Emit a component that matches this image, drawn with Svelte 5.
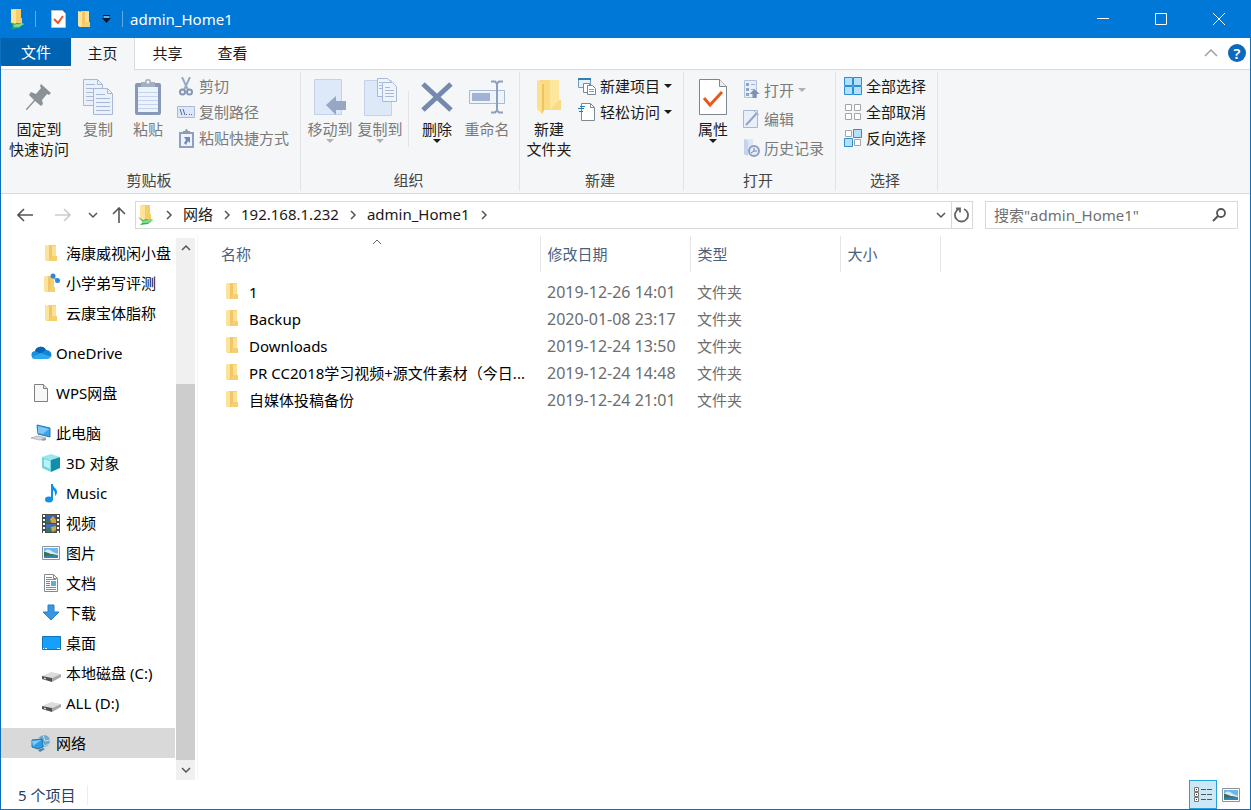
<script lang="ts">
  let activeTab = $state("主页");
  let selected = $state("网络");
  let view = $state("details");
  let query = $state("");

  const tabs = ["主页", "共享", "查看"];

  const tree = [
    [
      { name: "海康威视闲小盘", icon: "folder", child: true },
      { name: "小学弟写评测", icon: "folder-sync", child: true },
      { name: "云康宝体脂称", icon: "folder", child: true },
    ],
    [{ name: "OneDrive", icon: "cloud" }],
    [{ name: "WPS网盘", icon: "page" }],
    [
      { name: "此电脑", icon: "pc" },
      { name: "3D 对象", icon: "cube", child: true },
      { name: "Music", icon: "music", child: true },
      { name: "视频", icon: "video", child: true },
      { name: "图片", icon: "picture", child: true },
      { name: "文档", icon: "document", child: true },
      { name: "下载", icon: "download", child: true },
      { name: "桌面", icon: "desktop", child: true },
      { name: "本地磁盘 (C:)", icon: "disk", child: true },
      { name: "ALL (D:)", icon: "disk", child: true },
    ],
    [{ name: "网络", icon: "network" }],
  ];

  const path = ["网络", "192.168.1.232", "admin_Home1"];

  const files = [
    { name: "1", date: "2019-12-26 14:01" },
    { name: "Backup", date: "2020-01-08 23:17" },
    { name: "Downloads", date: "2019-12-24 13:50" },
    { name: "PR CC2018学习视频+源文件素材（今日...", date: "2019-12-24 14:48" },
    { name: "自媒体投稿备份", date: "2019-12-24 21:01" },
  ];
</script>

{#snippet icon(name: string)}
  {#if name === "folder"}
    <svg width="14" height="17" viewBox="0 0 14 17">
      <path d="M4 0h8v11h1v5H2z" fill="#f5cf70" />
      <path d="M1 0l4 1v15l-4-1z" fill="#fbe39c" />
      <path d="M5 1h3v10l-3 5z" fill="#f0c766" />
      <path d="M8 1h4v10H8z" fill="#fbdf92" />
    </svg>
  {:else if name === "folder-sync"}
    <svg width="18" height="20" viewBox="0 0 18 20">
      <path d="M5 3h7v11h1v5H3z" fill="#f5cf70" />
      <path d="M2 3l4 1v15l-4-1z" fill="#fbe39c" />
      <path d="M6 4h3v10l-3 5z" fill="#f0c766" />
      <path d="M11 4l5 4" stroke="#7ab6ee" stroke-width="2" />
      <circle cx="11" cy="3" r="2.5" fill="#2f86dc" />
      <circle cx="15.500" cy="7.500" r="2.500" fill="#2f86dc" />
    </svg>
  {:else if name === "folder-net"}
    <svg width="18" height="20" viewBox="0 0 18 20">
      <path d="M5 0h8v9h1v5H4z" fill="#f6cd66" />
      <path d="M3 0l5 1v14l-5-1z" fill="#fde49a" />
      <path d="M1 12l5 3 3-1 7 1-5 4-8 1 3-3z" fill="#35b34a" />
      <path d="M5 16l9-2 2 1-5 3H6z" fill="#7ddc8a" />
    </svg>
  {:else if name === "cloud"}
    <svg width="21" height="14" viewBox="0 0 21 14">
      <path d="M5 13a4 4 0 0 1-1-8 6 6 0 0 1 11-1 5 5 0 0 1 1 9z" fill="#1490df" />
      <path d="M4 5a6 6 0 0 1 11-1L10 8z" fill="#0a64b4" />
      <path d="M15 4a5 5 0 0 1 5 7l-10-4z" fill="#1583d8" />
      <path d="M1 11l9-4 10 4a5 5 0 0 1-4 2H5a4 4 0 0 1-4-2z" fill="#2aa9ec" />
    </svg>
  {:else if name === "page"}
    <svg width="16" height="19" viewBox="0 0 16 19">
      <path d="M1.5 .5h9l4 4v13h-13z" fill="#f7f7f7" stroke="#808080" />
      <path d="M10.5 .5v4h4" fill="#ddd" stroke="#808080" />
    </svg>
  {:else if name === "pc"}
    <svg width="20" height="18" viewBox="0 0 20 18">
      <path d="M6 1l13 3v9L7 10z" fill="#3aa4ea" stroke="#2a77ad" />
      <path d="M7 2l11 3-6 5-5-1z" fill="#7cc8f6" />
      <path d="M0 14l7-2 8 2-6 2z" fill="#d7dbe0" stroke="#b3b8bd" />
      <path d="M11 16l4-1" stroke="#99a" stroke-width="2" />
    </svg>
  {:else if name === "cube"}
    <svg width="20" height="18" viewBox="0 0 20 18">
      <path d="M10 0l9 3-9 3-9-3z" fill="#9be5ee" />
      <path d="M1 3l9 3v12l-9-4z" fill="#6fd6e2" />
      <path d="M19 3l-9 3v12l9-4z" fill="#138eaa" />
      <path d="M3 5l6 2v8l-6-3z" fill="#b9f1f4" />
    </svg>
  {:else if name === "music"}
    <svg width="14" height="19" viewBox="0 0 14 19">
      <ellipse cx="5" cy="15.5" rx="4" ry="3" fill="#0e91e8" />
      <path d="M7 16V0h2c0 4 4 4 4 8 0 2-1 3-2 4 0-3 0-5-2-6v10z" fill="#0e91e8" />
    </svg>
  {:else if name === "video"}
    <svg width="18" height="19" viewBox="0 0 18 19">
      <path d="M0 0h18v19H0z" fill="#4b4b4b" />
      <path d="M2 1v18M16 1v18" stroke="#fff" stroke-width="2" stroke-dasharray="2 2" />
      <path d="M4 1h10v8H4z" fill="#3562a9" />
      <path d="M4 10h10v8H4z" fill="#3f71b9" />
      <path d="M8 5l3-3 3 4v3H9zM9 13l5-1v4l-4 2z" fill="#c9a84a" />
      <path d="M4 6l4 1 2 2H4zM4 15l4-1 2 4H4z" fill="#327b4a" />
      <path d="M5 8l3-1 1 2z" fill="#c33" />
    </svg>
  {:else if name === "picture"}
    <svg width="18" height="14" viewBox="0 0 18 14">
      <path d="M.5 .5h17v13H.5z" fill="#fff" stroke="#8d9499" />
      <path d="M2 2h14v6H2z" fill="#6eb5ef" />
      <path d="M3 5c3-3 5-1 8 1l5 2H2z" fill="#d5ecfb" />
      <path d="M2 6c4 0 5 2 8 2l6 1v2H2z" fill="#39715c" />
      <path d="M2 10l14-1v3H2z" fill="#3482b8" />
    </svg>
  {:else if name === "document"}
    <svg width="16" height="18" viewBox="0 0 16 18">
      <path d="M1.5 .5h9l4 4v13h-13z" fill="#fff" stroke="#838b91" />
      <path d="M10.5 .5v4h4" fill="none" stroke="#838b91" />
      <path d="M3 3.500h6M3 5.500h10M3 13.500h10M3 15.500h10" stroke="#4c9ccb" />
      <path d="M3 7h4v1H3zM3 9h4v1H3zM3 11h4v1H3z" fill="#3b91c8" />
      <path d="M8 7h5v5H8z" fill="#5ab0d3" />
    </svg>
  {:else if name === "download"}
    <svg width="18" height="18" viewBox="0 0 18 18">
      <path d="M6 1h6v7h5l-8 8-8-8h5z" fill="#3896e3" stroke="#287dc4" />
    </svg>
  {:else if name === "desktop"}
    <svg width="19" height="14" viewBox="0 0 19 14">
      <path d="M.5 .5h18v13H.5z" fill="#16a0fa" stroke="#1272b8" />
      <path d="M1 12.5h1M3 12.5h2M15 12.5h3" stroke="#fff" />
    </svg>
  {:else if name === "disk"}
    <svg class="low" width="19" height="11" viewBox="0 0 19 11">
      <path d="M0 5l9-4 10 2-9 4z" fill="#dcdcdc" />
      <path d="M0 5l10 2v4L0 8z" fill="#505050" />
      <path d="M10 7l9-4v3l-9 5z" fill="#a8a8a8" />
      <path d="M2 7l2 1" stroke="#fff" />
    </svg>
  {:else if name === "network"}
    <svg width="20" height="18" viewBox="0 0 20 18">
      <circle cx="13" cy="7" r="6" fill="#6fa9c9" />
      <path d="M12 1l2 6 5-1M8 4l6 8 4-2" stroke="#bfe0ee" fill="none" />
      <path d="M1 6l10-1 1 8-5 2-6-2z" fill="#2e9ce5" stroke="#2477ad" />
      <path d="M1 7l9-1-8 6z" fill="#80caf5" />
      <path d="M7 16l5-2 2 1-5 3z" fill="#5481a1" />
    </svg>
  {:else if name === "check-page"}
    <svg width="15" height="18" viewBox="0 0 15 18">
      <path d="M.5 .5h11l3 3v14H.5z" fill="#fff" stroke="#b8c2ca" />
      <path d="M3 9l4 4 5-7" fill="none" stroke="#e25a2c" stroke-width="2" />
    </svg>
  {:else if name === "pin"}
    <svg width="26" height="28" viewBox="0 0 26 28">
      <path d="M15 1l10 9-2 2-2-1-5 6 1 4-2 2-6-5-8 9H0v-1l8-9-5-5 2-3 5 2 5-6-1-2z" fill="#8a9296" />
    </svg>
  {:else if name === "copy"}
    <svg width="32" height="38" viewBox="0 0 32 38">
      <path d="M1.5 1.5h14l5 5v21h-19z" fill="#eaf1fb" stroke="#a9b9d4" />
      <path d="M15.5 1.5v5h5M4 6.5h9M4 10.5h13M4 14.5h7M4 18.5h7M4 22.5h7" fill="none" stroke="#a9b9d4" />
      <path d="M11.5 10.5h14l5 5v21h-19z" fill="#eaf1fb" stroke="#a9b9d4" />
      <path d="M25.5 10.5v5h5M14 16.5h9M14 20.5h14M14 24.5h14M14 28.5h14M14 32.5h14" fill="none" stroke="#a9b9d4" />
    </svg>
  {:else if name === "paste"}
    <svg width="28" height="38" viewBox="0 0 28 38">
      <rect x="1" y="5" width="26" height="32" rx="2" fill="#8798b8" />
      <path d="M4 9h20v25H4z" fill="#edf3fc" />
      <path d="M4 14.5h20M4 18.5h20M4 22.5h20M4 26.5h20M4 30.5h20" stroke="#c5d4ec" />
      <path d="M7 9V4h4a3 3 0 0 1 6 0h4v5z" fill="#a4afc0" />
      <circle cx="14" cy="4" r="1.5" fill="#f5f6f7" />
    </svg>
  {:else if name === "cut"}
    <svg width="16" height="19" viewBox="0 0 16 19">
      <path d="M4 0l6 13M12 0L6 13" stroke="#9aa9c2" stroke-width="2" />
      <circle cx="4.500" cy="15" r="2.500" fill="none" stroke="#8496b5" stroke-width="2" />
      <circle cx="11.500" cy="15" r="2.500" fill="none" stroke="#8496b5" stroke-width="2" />
    </svg>
  {:else if name === "copy-path"}
    <svg width="18" height="12" viewBox="0 0 18 12">
      <path d="M.5 .5h17v11H.5z" fill="#dce7f7" stroke="#a9bad6" />
      <path d="M3 3l2 6M6 3l2 6" stroke="#5b6f94" />
      <path d="M9 8.500h1M12 8.500h1M14 8.500h1" stroke="#5b6f94" />
    </svg>
  {:else if name === "paste-link"}
    <svg width="15" height="19" viewBox="0 0 15 19">
      <path d="M1 4h13v14H1z" fill="#edf3fc" stroke="#8fa0be" stroke-width="2" />
      <path d="M4 5V2h2l1-2h1l1 2h2v3z" fill="#8c9ab2" />
      <path d="M5 8h6v6L9 12l-2 4-2-2 2-3z" fill="#6f88b4" />
    </svg>
  {:else if name === "move-to"}
    <svg width="34" height="38" viewBox="0 0 34 38">
      <path d="M1.5 1.5h27v35h-27z" fill="#dde8f8" stroke="#c3d2ea" />
      <path d="M13 27l10-9v5h10v9H23v5z" fill="#97a6c2" />
    </svg>
  {:else if name === "copy-to"}
    <svg width="36" height="40" viewBox="0 0 36 40">
      <path d="M2.5 3.5h27v35h-27z" fill="#dde8f8" stroke="#c3d2ea" />
      <path d="M15.5 1.5h10l3 3v15h-13z" fill="#eef4fc" stroke="#a9b9d4" />
      <path d="M20.5 5.5h10l4 4v15h-14z" fill="#eef4fc" stroke="#a9b9d4" />
      <path d="M17 5.5h3M17 8.5h3M17 11.5h3M23 10.5h5M23 13.5h9M23 16.5h9M23 19.5h9" stroke="#a9b9d4" />
    </svg>
  {:else if name === "delete"}
    <svg width="32" height="32" viewBox="0 0 32 32">
      <path d="M2 3l28 26M30 3L2 29" stroke="#7489ae" stroke-width="5" />
    </svg>
  {:else if name === "rename"}
    <svg width="38" height="34" viewBox="0 0 38 34">
      <path d="M1.5 10.5h35v13h-35z" fill="#eef4fc" stroke="#a9bad6" />
      <path d="M4 13h18v8H4z" fill="#a1b3d0" />
      <path d="M23 1.5h4l2 2 2-2h4M23 32.5h4l2-2 2 2h4M29 3v28" fill="none" stroke="#8d9fbe" stroke-width="2" />
    </svg>
  {:else if name === "new-folder"}
    <svg width="26" height="36" viewBox="0 0 26 36">
      <path d="M3 1h20v20h2v10H8z" fill="#fadb81" />
      <path d="M14 1h9v20l-9 10z" fill="#fde69d" />
      <path d="M1 1l7 4v26l-2 4-5-5z" fill="#fbe08d" />
      <path d="M8 5v26l-2 4V5z" fill="#edc462" />
    </svg>
  {:else if name === "new-item"}
    <svg width="18" height="19" viewBox="0 0 18 19">
      <path d="M.5 1.5h12v9H.5z" fill="#e7f2fb" stroke="#6b9cc0" />
      <path d="M0 2h13" stroke="#367eb0" stroke-width="2" />
      <path d="M5.5 6.5h6v9h-6z" fill="#fff" stroke="#77899a" />
      <path d="M9.5 8.5h5l3 3v6h-8z" fill="#fff" stroke="#77899a" />
      <path d="M11 12.5h5M11 14.5h5" stroke="#8aa0b4" />
    </svg>
  {:else if name === "easy-access"}
    <svg width="18" height="19" viewBox="0 0 18 19">
      <path d="M3.5 .5h9l4 4v13h-13z" fill="#fff" stroke="#7d8a96" />
      <path d="M12.5 .5v4h4" fill="none" stroke="#7d8a96" />
      <path d="M0 5.500h6M1 8.500h4M2 3.500h5" stroke="#2576b9" />
    </svg>
  {:else if name === "properties"}
    <svg width="28" height="38" viewBox="0 0 28 38">
      <path d="M.5 1.5h20l7 7v28H.5z" fill="#fff" stroke="#7f878e" />
      <path d="M20.5 1.5v7h7" fill="#eee" stroke="#7f878e" />
      <path d="M5 20l6 7 12-13" fill="none" stroke="#e8591c" stroke-width="3" />
    </svg>
  {:else if name === "open"}
    <svg width="18" height="19" viewBox="0 0 18 19">
      <path d="M2.5 .5h12v17h-12z" fill="#e8effa" stroke="#b2c2dc" />
      <path d="M4 3h3v3H4zM4 8h3v3H4zM4 13h3v3H4z" fill="#8fa3c5" />
      <path d="M9 4.5h4M9 9.5h3" stroke="#9bb0d0" />
      <path d="M12.5 9l5 5h-3v4h-4v-4h-3z" fill="#7d90b2" />
    </svg>
  {:else if name === "edit"}
    <svg width="18" height="18" viewBox="0 0 18 18">
      <path d="M1.5 .5h14v17h-14z" fill="#e8effa" stroke="#a9b9d4" />
      <path d="M4 15L15 3" stroke="#8fa5ca" stroke-width="2" />
      <path d="M12 1l5 4" stroke="#a9b9d4" />
    </svg>
  {:else if name === "history"}
    <svg width="18" height="19" viewBox="0 0 18 19">
      <path d="M2 1h9v16H2z" fill="#dce7f7" />
      <path d="M2 1l4 2v15l-4-2z" fill="#c4d4ec" />
      <circle cx="12" cy="13" r="5" fill="#e5edf9" stroke="#8da0c2" stroke-width="2" />
      <path d="M12 10v3l-3 2M12 13h3" fill="none" stroke="#7084aa" />
    </svg>
  {:else if name === "select-all"}
    <svg width="18" height="18" viewBox="0 0 18 18">
      <path d="M.5 .5h8v8h-8zM9.5 .5h8v8h-8zM.5 9.5h8v8h-8zM9.5 9.5h8v8h-8z" fill="#b4e0fb" stroke="#2b8fd6" />
    </svg>
  {:else if name === "select-none"}
    <svg width="18" height="18" viewBox="0 0 18 18">
      <path d="M1.5 1.5h6v6h-6zM10.5 1.5h6v6h-6zM1.5 10.5h6v6h-6zM10.5 10.5h6v6h-6z" fill="#fff" stroke="#a5a5a5" />
    </svg>
  {:else if name === "select-invert"}
    <svg width="18" height="18" viewBox="0 0 18 18">
      <path d="M1.5 1.5h6v6h-6zM10.5 10.5h6v6h-6z" fill="#fff" stroke="#a5a5a5" />
      <path d="M9.5 .5h8v8h-8zM.5 9.5h8v8h-8z" fill="#b4e0fb" stroke="#2b8fd6" />
    </svg>
  {/if}
{/snippet}

{#snippet chevron(dir: string)}
  <svg class="chevron {dir}" width="10" height="10" viewBox="0 0 10 10">
    <path d="M1 3l4 4 4-4" fill="none" stroke="currentColor" stroke-width="1.5" />
  </svg>
{/snippet}

{#snippet large(name: string, label: string, lines: string[], off = false, menu = false)}
  <button class="large" class:off aria-label={label}>
    <span class="pic">{@render icon(name)}</span>
    {#each lines as line}
      <span class="line">{line}</span>
    {/each}
    {#if menu}<i class="caret"></i>{/if}
  </button>
{/snippet}

{#snippet small(name: string, label: string, off = false, menu = false)}
  <button class="small" class:off>
    <span class="pic">{@render icon(name)}</span>
    {label}
    {#if menu}<i class="caret"></i>{/if}
  </button>
{/snippet}

<div class="window">
  <header class="titlebar">
    <div class="quick">
      <span class="app-icon">{@render icon("folder-net")}</span>
      <i class="bar"></i>
      <button aria-label="属性">{@render icon("check-page")}</button>
      <button aria-label="新建文件夹">{@render icon("folder")}</button>
      <button aria-label="自定义快速访问工具栏">
        <svg width="9" height="8" viewBox="0 0 9 8">
          <path d="M1 .5h7" stroke="#001a33" />
          <path d="M0 3h9L4.5 8z" fill="#001a33" />
          <path d="M2 2h5" stroke="#cfe4f7" />
        </svg>
      </button>
      <i class="bar"></i>
    </div>
    <h1>admin_Home1</h1>
    <div class="controls">
      <button aria-label="最小化">
        <svg width="12" height="12" viewBox="0 0 12 12"><path d="M0 5.5h12" /></svg>
      </button>
      <button aria-label="最大化">
        <svg width="12" height="12" viewBox="0 0 12 12"><path d="M.5 .5h11v11H.5z" /></svg>
      </button>
      <button aria-label="关闭">
        <svg width="12" height="12" viewBox="0 0 12 12"><path d="M0 0l12 12M12 0L0 12" /></svg>
      </button>
    </div>
  </header>

  <div class="tabs">
    <button class="file">文件</button>
    {#each tabs as tab}
      <button class="tab" class:active={activeTab === tab} onclick={() => (activeTab = tab)}>{tab}</button>
    {/each}
    <div class="tabs-end">
      <button class="collapse" aria-label="最小化功能区">
        <svg width="14" height="8" viewBox="0 0 14 8">
          <path d="M1 7l6-6 6 6" fill="none" stroke="#a0a0a0" stroke-width="1.5" />
        </svg>
      </button>
      <button class="help" aria-label="帮助">?</button>
    </div>
  </div>

  <div class="ribbon">
    <section>
      <div class="tools">
        <div class="wide">{@render large("pin", "固定到快速访问", ["固定到", "快速访问"])}</div>
        {@render large("copy", "复制", ["复制"], true)}
        {@render large("paste", "粘贴", ["粘贴"], true)}
        <div class="stack">
          {@render small("cut", "剪切", true)}
          {@render small("copy-path", "复制路径", true)}
          {@render small("paste-link", "粘贴快捷方式", true)}
        </div>
      </div>
      <h2>剪贴板</h2>
    </section>
    <section>
      <div class="tools">
        {@render large("move-to", "移动到", ["移动到"], true, true)}
        {@render large("copy-to", "复制到", ["复制到"], true, true)}
        <i class="split"></i>
        {@render large("delete", "删除", ["删除"], false, true)}
        {@render large("rename", "重命名", ["重命名"], true)}
      </div>
      <h2>组织</h2>
    </section>
    <section>
      <div class="tools">
        {@render large("new-folder", "新建文件夹", ["新建", "文件夹"])}
        <div class="stack">
          {@render small("new-item", "新建项目", false, true)}
          {@render small("easy-access", "轻松访问", false, true)}
        </div>
      </div>
      <h2>新建</h2>
    </section>
    <section>
      <div class="tools">
        {@render large("properties", "属性", ["属性"], false, true)}
        <div class="stack loose">
          {@render small("open", "打开", true, true)}
          {@render small("edit", "编辑", true)}
          {@render small("history", "历史记录", true)}
        </div>
      </div>
      <h2>打开</h2>
    </section>
    <section>
      <div class="tools">
        <div class="stack">
          {@render small("select-all", "全部选择")}
          {@render small("select-none", "全部取消")}
          {@render small("select-invert", "反向选择")}
        </div>
      </div>
      <h2>选择</h2>
    </section>
  </div>

  <div class="navbar">
    <div class="history">
      <button aria-label="后退">
        <svg width="16" height="14" viewBox="0 0 16 14" stroke-width="1.6"><path d="M7 1L1 7l6 6M1 7h15" /></svg>
      </button>
      <button class="faded" aria-label="前进">
        <svg width="16" height="14" viewBox="0 0 16 14" stroke-width="1.6"><path d="M9 1l6 6-6 6M15 7H0" /></svg>
      </button>
      <button class="recent" aria-label="最近浏览的位置">{@render chevron("down")}</button>
      <button class="up" aria-label="上移">
        <svg width="14" height="16" viewBox="0 0 14 16" stroke-width="1.6"><path d="M1 7l6-6 6 6M7 1v15" /></svg>
      </button>
    </div>
    <nav class="address" aria-label="地址">
      <span class="place">{@render icon("folder-net")}</span>
      {@render chevron("right")}
      {#each path as part}
        <a href="#top">{part}</a>
        {@render chevron("right")}
      {/each}
      <span class="space"></span>
      <button aria-label="以前的位置">{@render chevron("down")}</button>
      <button class="refresh" aria-label="刷新">
        <svg width="16" height="16" viewBox="0 0 16 16">
          <path d="M10 2a6.5 6.5 0 1 1-5 0M2 1.5h4v4" fill="none" stroke="#666" stroke-width="1.8" />
        </svg>
      </button>
    </nav>
    <label class="search">
      <input type="text" bind:value={query} placeholder={'搜索"admin_Home1"'} aria-label="搜索" />
      <svg width="14" height="14" viewBox="0 0 14 14">
        <circle cx="9" cy="5" r="4" fill="none" stroke="#555" stroke-width="1.8" />
        <path d="M6 8l-5 5" stroke="#555" stroke-width="2" />
      </svg>
    </label>
  </div>

  <div class="body">
    <aside>
      {#each tree as group}
        <ul>
          {#each group as item}
            <li>
              <button
                class="node"
                class:child={item.child}
                class:selected={selected === item.name}
                onclick={() => (selected = item.name)}
              >
                <span class="pic">{@render icon(item.icon)}</span>
                {item.name}
              </button>
            </li>
          {/each}
        </ul>
      {/each}
    </aside>
    <div class="scrollbar">
      <button aria-label="向上滚动">{@render chevron("top")}</button>
      <div class="track"><div class="thumb"></div></div>
      <button aria-label="向下滚动">{@render chevron("down")}</button>
    </div>
    <main>
      <table>
        <thead>
          <tr>
            <th class="name">
              名称
              <svg class="sort" width="10" height="6" viewBox="0 0 10 6">
                <path d="M1 5l4-4 4 4" fill="none" stroke="#666" />
              </svg>
            </th>
            <th class="date">修改日期</th>
            <th class="type">类型</th>
            <th class="size">大小</th>
          </tr>
        </thead>
        <tbody>
          {#each files as file}
            <tr>
              <td class="name">
                <span class="entry">{@render icon("folder")}{file.name}</span>
              </td>
              <td class="stamp">{file.date}</td>
              <td>文件夹</td>
              <td></td>
            </tr>
          {/each}
        </tbody>
      </table>
    </main>
  </div>

  <footer>
    <span class="count">5 个项目</span>
    <div class="views">
      <button class:active={view === "details"} aria-label="详细信息" onclick={() => (view = "details")}>
        <svg width="18" height="16" viewBox="0 0 18 16">
          <path d="M.5 .5h4v4h-4zM.5 5.5h4v4h-4zM.5 10.5h4v4h-4z" fill="#fff" stroke="#777" />
          <path d="M2 2.5h1M2 7.5h1M2 12.5h1" stroke="#333" />
          <path d="M7 2.5h5M13 2.5h5M7 7.5h5M13 7.5h5M7 12.5h5M13 12.5h5" stroke="#555" />
        </svg>
      </button>
      <button class:active={view === "thumbs"} aria-label="大图标" onclick={() => (view = "thumbs")}>
        {@render icon("picture")}
      </button>
    </div>
  </footer>
</div>

<style>
  :global(body) {
    margin: 0;
  }

  .window {
    box-sizing: border-box;
    min-height: 100vh;
    display: flex;
    flex-direction: column;
    border: 1px solid #0f6fbd;
    border-top: none;
    background: #fff;
    color: #1a1a1a;
    font-family: "Noto Sans", "Noto Sans CJK SC", sans-serif;
    font-size: 15px;
    line-height: 20px;
  }

  button,
  input {
    margin: 0;
    padding: 0;
    border: none;
    background: none;
    color: inherit;
    font: inherit;
  }

  svg {
    display: block;
    flex: none;
  }

  h1,
  h2 {
    margin: 0;
    font-size: 15px;
    font-weight: 400;
  }

  .titlebar {
    display: flex;
    align-items: center;
    height: 38px;
    margin: 0 -1px;
    background: #0078d7;
    color: #fff;
  }

  .quick {
    display: flex;
    align-items: center;
    gap: 11px;
    padding: 0 7px 0 8px;
  }

  .quick .app-icon {
    margin-right: -2px;
  }

  .bar {
    width: 1px;
    height: 16px;
    background: #64a9e4;
  }

  .quick .bar:not(:last-child) {
    margin-right: 4px;
  }

  .controls {
    display: flex;
    margin-left: auto;
    padding-right: 3px;
  }

  .controls button {
    display: flex;
    justify-content: center;
    align-items: center;
    width: 58px;
    height: 38px;
  }

  .controls path {
    fill: none;
    stroke: #fff;
  }

  .tabs {
    display: flex;
    height: 31px;
    border-bottom: 1px solid #dadbdc;
  }

  .file {
    width: 70px;
    height: 28px;
    background: #0063b1;
    color: #fff;
  }

  .tab {
    box-sizing: border-box;
    width: 65px;
    height: 31px;
    padding-bottom: 2px;
  }

  .tab.active {
    width: 64px;
    height: 32px;
    border-right: 1px solid #dadbdc;
    background: #f5f6f7;
  }

  .tabs-end {
    display: flex;
    align-items: center;
    gap: 10px;
    margin-left: auto;
    padding: 0 4px 2px 0;
  }

  .help {
    width: 18px;
    height: 18px;
    border-radius: 50%;
    background: #0c69bd;
    color: #fff;
    font-weight: 600;
    line-height: 18px;
  }

  .ribbon {
    display: flex;
    height: 123px;
    border-bottom: 1px solid #dadbdc;
    background: #f5f6f7;
  }

  .ribbon section {
    display: flex;
    flex-direction: column;
    justify-content: space-between;
    box-sizing: border-box;
    margin: 2px 0;
    padding: 1px 7px 1px 4px;
    border-right: 1px solid #e2e3e4;
  }

  .ribbon h2 {
    color: #444;
    text-align: center;
  }

  .tools {
    display: flex;
    align-items: flex-start;
  }

  .large {
    display: flex;
    flex-direction: column;
    align-items: center;
    width: 50px;
    padding-top: 4px;
    white-space: nowrap;
  }

  .wide .large {
    width: 68px;
  }

  .large .pic {
    display: flex;
    justify-content: center;
    align-items: center;
    height: 40px;
    margin-bottom: 2px;
  }

  .off {
    color: #7a7a7a;
  }

  .caret {
    border: 4px solid transparent;
    border-top-color: currentColor;
    border-bottom: none;
  }

  .off .caret {
    border-top-color: #b0b0b0;
  }

  .split {
    width: 1px;
    height: 56px;
    margin: 18px 3px 0;
    background: #e2e3e4;
  }

  .stack {
    display: flex;
    flex-direction: column;
  }

  .small {
    display: flex;
    align-items: center;
    gap: 4px;
    height: 26px;
    padding: 0 4px;
    white-space: nowrap;
  }

  .small .pic {
    display: flex;
    justify-content: center;
    width: 18px;
  }

  .loose {
    padding-top: 2px;
  }

  .loose .small {
    height: 29px;
  }

  .navbar {
    display: flex;
    align-items: center;
    padding: 7px 12px 7px 0;
  }

  .history {
    display: flex;
    align-items: center;
    gap: 22px;
    padding: 0 9px 0 16px;
  }

  .history path {
    fill: none;
    stroke: #555;
  }

  .history .recent {
    margin: 0 -8px 0 -5px;
  }

  .faded {
    opacity: 0.3;
  }

  .chevron {
    color: #555;
  }

  .chevron.right {
    rotate: -90deg;
  }

  .chevron.top {
    rotate: 180deg;
  }

  .address {
    display: flex;
    flex: 1;
    align-items: center;
    height: 26px;
    border: 1px solid #d9d9d9;
  }

  .address a {
    margin: 0 9px;
    padding-bottom: 2px;
    color: #1a1a1a;
    text-decoration: none;
  }

  .place {
    padding: 0 9px 0 1px;
  }

  .space {
    flex: 1;
  }

  .address button {
    display: flex;
    justify-content: center;
    align-items: center;
    width: 21px;
    height: 26px;
  }

  .address .refresh {
    border-left: 1px solid #d9d9d9;
  }

  .search {
    display: flex;
    align-items: center;
    box-sizing: border-box;
    width: 253px;
    height: 28px;
    margin-left: 12px;
    padding: 0 11px 0 8px;
    border: 1px solid #d9d9d9;
  }

  .search input {
    flex: 1;
    min-width: 0;
    outline: none;
  }

  .search input::placeholder {
    color: #6f6f6f;
    opacity: 1;
  }

  .body {
    display: flex;
    flex: 1;
  }

  aside {
    width: 174px;
    padding: 2px 0 22px;
  }

  ul {
    margin: 0 0 10px;
    padding: 0;
    list-style: none;
  }

  ul:last-child {
    margin-bottom: 0;
  }

  .node {
    display: flex;
    align-items: center;
    gap: 5px;
    width: 100%;
    height: 30px;
    padding-left: 30px;
    color: #000;
    white-space: nowrap;
  }

  .node.child {
    padding-left: 40px;
  }

  .node.selected {
    background: #d9d9d9;
  }

  .node .pic {
    display: flex;
    justify-content: center;
    width: 20px;
  }

  .low {
    margin-top: 6px;
  }

  .scrollbar {
    display: flex;
    flex-direction: column;
    width: 19px;
    margin: 2px 2px 0 1px;
    background: #f0f0f0;
  }

  .scrollbar button {
    display: flex;
    justify-content: center;
    align-items: center;
    height: 20px;
  }

  .track {
    display: flex;
    flex: 1;
    align-items: flex-end;
  }

  .thumb {
    width: 100%;
    height: 75%;
    background: #cdcdcd;
  }

  main {
    flex: 1;
    border-left: 1px solid #f5f5f5;
  }

  table {
    width: 742px;
    border-collapse: collapse;
    table-layout: fixed;
  }

  th,
  td {
    box-sizing: border-box;
    padding: 0 7px;
    font-weight: 400;
    text-align: left;
    white-space: nowrap;
  }

  th {
    position: relative;
    height: 36px;
    border-right: 1px solid #e5e5e5;
    color: #4c607a;
  }

  td {
    height: 27px;
    color: #6d6d6d;
  }

  th.name {
    width: 342px;
    padding-left: 23px;
  }

  .date,
  .type {
    width: 150px;
  }

  .size {
    width: 100px;
  }

  td.stamp {
    font-size: 16px;
  }

  .sort {
    position: absolute;
    top: 3px;
    left: calc(50% + 3px);
  }

  tbody::before {
    content: "";
    display: block;
    height: 6px;
  }

  td.name {
    padding-left: 27px;
    color: #000;
  }

  .entry {
    display: flex;
    align-items: center;
    gap: 10px;
  }

  footer {
    display: flex;
    justify-content: space-between;
    align-items: center;
    height: 29px;
    padding: 0 5px 0 17px;
    color: #26415f;
  }

  .count {
    padding-right: 12px;
    border-right: 1px solid #ececec;
  }

  .views {
    display: flex;
  }

  .views button {
    display: flex;
    justify-content: center;
    align-items: center;
    box-sizing: border-box;
    width: 28px;
    height: 29px;
  }

  .views .active {
    border: 1px solid #26a0da;
    background: #cce8f7;
  }
</style>
